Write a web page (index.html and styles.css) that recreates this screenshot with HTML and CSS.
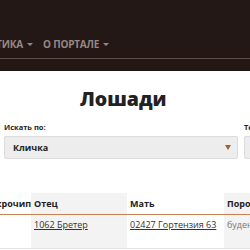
FILE: index.html
```html
<!DOCTYPE html>
<html lang="ru">
<head>
<meta charset="utf-8">
<link rel="stylesheet" href="styles.css">
</head>
<body>
<header class="site-header">
  <nav class="nav">
    <ul class="nav-list">
      <li class="nav-item">АНАЛИТИКА <span class="caret"></span></li>
      <li class="nav-item">О ПОРТАЛЕ <span class="caret"></span></li>
    </ul>
  </nav>
</header>
<main class="content">
  <h1 class="title">Лошади</h1>
  <form class="search">
    <div class="field field-main">
      <label class="label">Искать по:</label>
      <div class="select">Кличка <span class="select-arrow"></span></div>
    </div>
    <div class="field field-text">
      <label class="label">Текст</label>
      <div class="select"></div>
    </div>
  </form>
  <table class="table">
    <thead>
      <tr>
        <th class="c-chip">Микрочип</th>
        <th class="c-father shade">Отец</th>
        <th class="c-mother">Мать</th>
        <th class="c-breed shade">Порода</th>
      </tr>
    </thead>
    <tbody>
      <tr>
        <td class="c-chip"></td>
        <td class="c-father shade"><a href="#">1062 Бретер</a></td>
        <td class="c-mother"><a href="#">02427 Гортензия 63</a></td>
        <td class="c-breed shade muted">буденновская</td>
      </tr>
    </tbody>
  </table>
</main>
</body>
</html>
```

FILE: styles.css
```css
html, body {
  margin: 0;
  padding: 0;
  background: #ffffff;
  overflow: hidden;
  width: 250px;
  height: 250px;
}
body {
  font-family: "Open Sans", "Liberation Sans", sans-serif;
  color: #222222;
}
.site-header {
  background: #231816;
  height: 71px;
  box-sizing: border-box;
  padding-top: 37px;
}
.nav {
  border-bottom: 1px solid #5e4b46;
  height: 22px;
  box-sizing: border-box;
}
.nav-list {
  list-style: none;
  margin: 0 0 0 -40px;
  padding: 0;
  display: flex;
  gap: 10px;
  white-space: nowrap;
}
.nav-item {
  font-size: 10px;
  font-weight: 700;
  line-height: 14px;
  color: #988782;
  letter-spacing: -0.2px;
  display: flex;
  align-items: center;
  gap: 4px;
}
.caret {
  width: 0;
  height: 0;
  border-left: 3px solid transparent;
  border-right: 3px solid transparent;
  border-top: 3px solid #988782;
}
.content {
  white-space: nowrap;
}
.title {
  margin: 0;
  padding-top: 16px;
  height: 40px;
  box-sizing: border-box;
  font-size: 19.5px;
  line-height: 24px;
  font-weight: 800;
  color: #222222;
  padding-left: 80px;
  letter-spacing: 0;
}
.search {
  display: flex;
  gap: 6px;
  padding-left: 4px;
  margin-top: 11px;
}
.field {
  flex: none;
}
.field-main {
  width: 234px;
}
.field-text {
  width: 120px;
}
.label {
  display: block;
  font-size: 7.5px;
  font-weight: 700;
  line-height: 10px;
  color: #222;
  margin-bottom: 4px;
}
.select {
  height: 23px;
  box-sizing: border-box;
  background: #ededed;
  border: 1px solid #dcdcdc;
  border-radius: 2px;
  font-size: 9px;
  font-weight: 700;
  line-height: 21px;
  padding-left: 8px;
  color: #222;
  display: flex;
  align-items: center;
  justify-content: space-between;
}
.select-arrow {
  width: 0;
  height: 0;
  border-left: 3px solid transparent;
  border-right: 3px solid transparent;
  border-top: 5px solid #a2612a;
  margin-right: 6px;
}
.table {
  border-collapse: collapse;
  margin-top: 34px;
  margin-left: -22px;
  table-layout: fixed;
  font-size: 9px;
  width: 336px;
}
.table th, .table td {
  box-sizing: border-box;
  overflow: hidden;
}
.table th {
  font-weight: 700;
  text-align: left;
  height: 21px;
  padding: 0 3px;
  vertical-align: middle;
  border-bottom: 1px solid #c9824f;
  color: #222;
}
.table td {
  height: 34px;
  padding: 3px 3px 0;
  vertical-align: top;
  border-bottom: 1px solid #e3e3e3;
}
.c-chip { width: 53px; }
.c-father { width: 96px; }
.c-mother { width: 97px; }
.c-breed { width: 90px; }
.shade { background: #f3f3f3; }
.table a {
  color: #333;
  text-decoration: underline;
}
.muted { color: #777; }
```
